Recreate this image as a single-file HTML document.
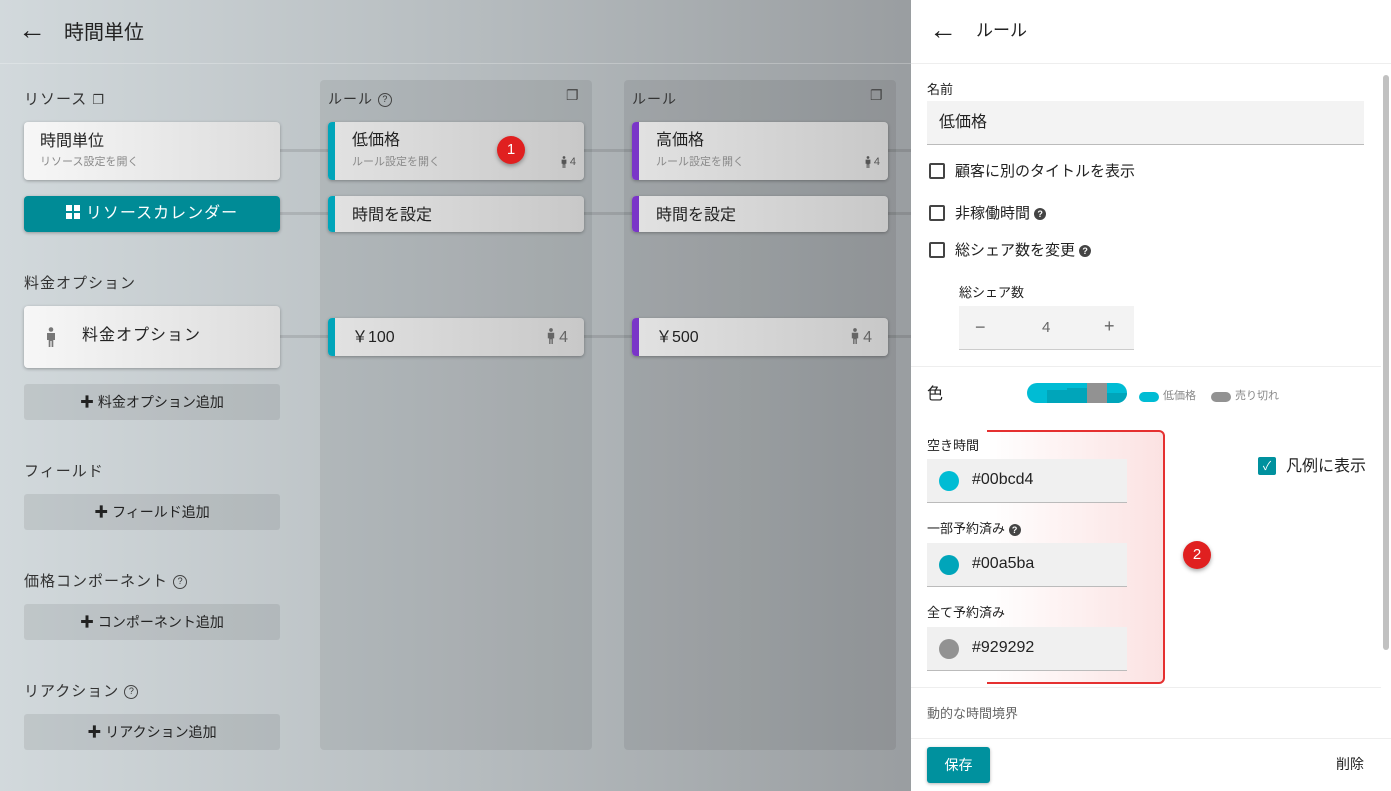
<!DOCTYPE html>
<html><head><meta charset="utf-8"><style>
*{box-sizing:border-box;margin:0;padding:0}
body{width:1391px;height:791px;overflow:hidden;position:relative;font-family:"Liberation Sans","Noto Sans CJK JP",sans-serif;color:#222;line-height:1.3;background:linear-gradient(90deg,#d2d9dc 0%,#b5bbbe 35%,#9a9ea1 65%,#888b8d 100%)}
.abs{position:absolute}
.hdr{left:0;top:0;width:911px;height:64px;border-bottom:1px solid rgba(255,255,255,.25)}
.col{background:rgba(0,0,0,.07);border-radius:4px}
.card{position:absolute;border-radius:4px;background:linear-gradient(90deg,#f7f7f7,#dcdcdc);box-shadow:0 1px 3px rgba(0,0,0,.3)}
.rc{background:linear-gradient(90deg,#e2e2e2,#c8c8c8)}
.bar{position:absolute;left:0;top:0;bottom:0;width:7px;border-radius:4px 0 0 4px}
.t{position:absolute;font-size:16px}
.s{position:absolute;font-size:11px;color:#8a8a8a}
.btn{position:absolute;left:24px;width:256px;height:36px;border-radius:3px;background:rgba(0,0,0,.08);font-size:14px;text-align:center;line-height:36px;color:#222}
.line{position:absolute;height:3px;background:rgba(0,0,0,.1)}
.lbl{position:absolute;font-size:15px;color:#333;letter-spacing:1px}
.panel{left:911px;top:0;width:480px;height:791px;background:#fff}
.cb{position:absolute;width:16px;height:16px;border:2px solid #444;border-radius:2px}
.field{position:absolute;left:927px;width:200px;height:44px;background:#f0f0f0;border-bottom:1px solid #bbb;font-size:16px}
.dot{position:absolute;left:12px;top:12px;width:20px;height:20px;border-radius:50%}
.q{display:inline-block;width:12px;height:12px;border-radius:50%;background:#444;color:#fff;font-size:9px;text-align:center;line-height:12px;font-weight:bold;vertical-align:middle}
.qo{display:inline-block;width:14px;height:14px;border:1.5px solid #444;border-radius:50%;font-size:9px;text-align:center;line-height:11px;letter-spacing:0;vertical-align:middle}
.badge{position:absolute;width:28px;height:28px;border-radius:50%;background:#e02020;color:#fff;font-size:15px;text-align:center;line-height:28px;box-shadow:0 2px 4px rgba(0,0,0,.35)}
.pi{display:inline-block;vertical-align:middle}
</style></head><body>
<svg width="0" height="0" style="position:absolute"><defs><symbol id="per" viewBox="0 0 10 20"><circle cx="5" cy="2.5" r="2.3" fill="currentColor"/><path d="M1 6h8v7H7.3v7H5.6v-6H4.4v6H2.7v-7H1z" fill="currentColor"/></symbol></defs></svg>
<div class="abs hdr"></div>
<div class="abs" style="left:18px;top:17px;font-size:28px;line-height:26px">&#8592;</div>
<div class="abs" style="left:64px;top:20px;font-size:20px">時間単位</div>

<div class="abs col" style="left:320px;top:80px;width:272px;height:670px"></div>
<div class="abs col" style="left:624px;top:80px;width:272px;height:670px"></div>

<div class="lbl" style="left:24px;top:90px">リソース <span style="font-size:13px">❐</span></div>
<div class="lbl" style="left:328px;top:90px;font-size:14px">ルール <span class="qo">?</span></div>
<div class="abs" style="left:566px;top:86px;font-size:14px;color:#444">❐</div>
<div class="lbl" style="left:632px;top:90px;font-size:14px">ルール</div>
<div class="abs" style="left:870px;top:86px;font-size:14px;color:#444">❐</div>

<div class="line" style="left:280px;top:149px;width:631px"></div>
<div class="line" style="left:280px;top:212px;width:631px"></div>
<div class="line" style="left:280px;top:335px;width:631px"></div>

<div class="card" style="left:24px;top:122px;width:256px;height:58px"><div class="t" style="left:16px;top:10px">時間単位</div><div class="s" style="left:16px;top:33px">リソース設定を開く</div></div>
<div class="abs" style="left:24px;top:196px;width:256px;height:36px;border-radius:4px;background:#008b96;box-shadow:0 1px 3px rgba(0,0,0,.3);color:#fff;font-size:16px;line-height:36px;text-align:center;letter-spacing:1px"><svg class="pi" width="14" height="14" viewBox="0 0 14 14" style="margin-right:6px;margin-top:-3px"><rect x="0" y="0" width="6" height="6" fill="#fff"/><rect x="8" y="0" width="6" height="6" fill="#fff"/><rect x="0" y="8" width="6" height="6" fill="#fff"/><rect x="8" y="8" width="6" height="6" fill="#fff"/></svg>リソースカレンダー</div>

<div class="card rc" style="left:328px;top:122px;width:256px;height:58px"><div class="bar" style="background:#00a5ba"></div><div class="t" style="left:24px;top:9px">低価格</div><div class="s" style="left:24px;top:33px">ルール設定を開く</div><div class="s" style="right:8px;top:33px;color:#555"><svg class="pi" width="6" height="12"><use href="#per"/></svg> 4</div></div>
<div class="badge" style="left:497px;top:136px">1</div>
<div class="card rc" style="left:328px;top:196px;width:256px;height:36px"><div class="bar" style="background:#00a5ba"></div><div class="t" style="left:24px;top:10px">時間を設定</div></div>
<div class="card rc" style="left:328px;top:318px;width:256px;height:38px"><div class="bar" style="background:#00a5ba"></div><div class="t" style="left:24px;top:10px">￥100</div><div class="abs" style="right:16px;top:10px;font-size:16px;color:#666"><svg class="pi" width="8" height="16" style="margin-top:-3px"><use href="#per"/></svg> 4</div></div>

<div class="card rc" style="left:632px;top:122px;width:256px;height:58px"><div class="bar" style="background:#7a35c8"></div><div class="t" style="left:24px;top:9px">高価格</div><div class="s" style="left:24px;top:33px">ルール設定を開く</div><div class="s" style="right:8px;top:33px;color:#555"><svg class="pi" width="6" height="12"><use href="#per"/></svg> 4</div></div>
<div class="card rc" style="left:632px;top:196px;width:256px;height:36px"><div class="bar" style="background:#7a35c8"></div><div class="t" style="left:24px;top:10px">時間を設定</div></div>
<div class="card rc" style="left:632px;top:318px;width:256px;height:38px"><div class="bar" style="background:#7a35c8"></div><div class="t" style="left:24px;top:10px">￥500</div><div class="abs" style="right:16px;top:10px;font-size:16px;color:#666"><svg class="pi" width="8" height="16" style="margin-top:-3px"><use href="#per"/></svg> 4</div></div>

<div class="lbl" style="left:24px;top:274px">料金オプション</div>
<div class="card" style="left:24px;top:306px;width:256px;height:62px"><svg class="abs" style="left:22px;top:21px;color:#777" width="10" height="20"><use href="#per"/></svg><div class="t" style="left:58px;top:20px;letter-spacing:1px">料金オプション</div></div>
<div class="btn" style="top:384px">✚ 料金オプション追加</div>
<div class="lbl" style="left:24px;top:462px">フィールド</div>
<div class="btn" style="top:494px">✚ フィールド追加</div>
<div class="lbl" style="left:24px;top:572px">価格コンポーネント <span class="qo">?</span></div>
<div class="btn" style="top:604px">✚ コンポーネント追加</div>
<div class="lbl" style="left:24px;top:682px">リアクション <span class="qo">?</span></div>
<div class="btn" style="top:714px">✚ リアクション追加</div>

<div class="abs panel">
<div class="abs" style="left:0;top:0;width:480px;height:64px;border-bottom:1px solid #eee"></div>
<div class="abs" style="left:18px;top:17px;font-size:28px;line-height:26px">&#8592;</div>
<div class="abs" style="left:65px;top:20px;font-size:17px">ルール</div>
<div class="abs" style="left:472px;top:75px;width:6px;height:575px;background:#c1c1c1;border-radius:3px"></div>
</div>
<div class="abs" style="left:927px;top:82px;font-size:13px">名前</div>
<div class="abs" style="left:927px;top:101px;width:437px;height:44px;background:#f3f3f3;border-bottom:1px solid #bbb;font-size:16px;padding:12px 12px">低価格</div>
<div class="cb" style="left:929px;top:163px"></div><div class="abs" style="left:955px;top:162px;font-size:15px">顧客に別のタイトルを表示</div>
<div class="cb" style="left:929px;top:205px"></div><div class="abs" style="left:955px;top:204px;font-size:15px">非稼働時間 <span class="q">?</span></div>
<div class="cb" style="left:929px;top:242px"></div><div class="abs" style="left:955px;top:241px;font-size:15px">総シェア数を変更 <span class="q">?</span></div>
<div class="abs" style="left:959px;top:285px;font-size:13px">総シェア数</div>
<div class="abs" style="left:959px;top:306px;width:175px;height:44px;background:#f3f3f3;border-bottom:1px solid #ccc;font-size:15px;color:#666"><span class="abs" style="left:16px;top:10px;font-size:18px">−</span><span class="abs" style="left:83px;top:12px">4</span><span class="abs" style="left:145px;top:9px;font-size:18px">+</span></div>
<div class="abs" style="left:911px;top:366px;width:470px;height:1px;background:#eee"></div>
<div class="abs" style="left:927px;top:385px;font-size:16px">色</div>
<div class="abs" style="left:1027px;top:383px;width:100px;height:20px;border-radius:10px;background:#00bcd4;overflow:hidden"><div class="abs" style="left:20px;top:7px;width:20px;height:13px;background:#00a5ba"></div><div class="abs" style="left:40px;top:5px;width:20px;height:15px;background:#00a5ba"></div><div class="abs" style="left:60px;top:0;width:20px;height:20px;background:#929292"></div><div class="abs" style="left:80px;top:10px;width:20px;height:10px;background:#00a5ba"></div></div>
<div class="abs" style="left:1139px;top:392px;width:20px;height:10px;border-radius:5px;background:#00bcd4"></div><div class="abs" style="left:1163px;top:389px;font-size:11px;color:#888">低価格</div>
<div class="abs" style="left:1211px;top:392px;width:20px;height:10px;border-radius:5px;background:#929292"></div><div class="abs" style="left:1235px;top:389px;font-size:11px;color:#888">売り切れ</div>
<div class="abs" style="left:987px;top:430px;width:178px;height:254px;border:2px solid #e53030;border-left:none;border-radius:0 6px 6px 0;background:linear-gradient(90deg,rgba(230,60,60,0) 0%,rgba(230,60,60,.15) 100%)"></div>
<div class="badge" style="left:1183px;top:541px">2</div>
<div class="abs" style="left:927px;top:438px;font-size:13px">空き時間</div>
<div class="field" style="top:459px"><div class="dot" style="background:#00bcd4"></div><span class="abs" style="left:45px;top:11px">#00bcd4</span></div>
<div class="abs" style="left:927px;top:521px;font-size:13px">一部予約済み <span class="q">?</span></div>
<div class="field" style="top:543px"><div class="dot" style="background:#00a5ba"></div><span class="abs" style="left:45px;top:11px">#00a5ba</span></div>
<div class="abs" style="left:927px;top:605px;font-size:13px">全て予約済み</div>
<div class="field" style="top:627px"><div class="dot" style="background:#929292"></div><span class="abs" style="left:45px;top:11px">#929292</span></div>
<div class="abs" style="left:1258px;top:457px;width:18px;height:18px;background:#00919e;border-radius:2px;color:#fff;font-size:12px;text-align:center;line-height:18px">✓</div>
<div class="abs" style="left:1286px;top:457px;font-size:16px">凡例に表示</div>
<div class="abs" style="left:911px;top:687px;width:470px;height:1px;background:#eee"></div>
<div class="abs" style="left:927px;top:706px;font-size:13px;color:#666">動的な時間境界</div>
<div class="abs" style="left:911px;top:738px;width:480px;height:1px;background:#eee"></div>
<div class="abs" style="left:927px;top:747px;width:63px;height:36px;background:#00919e;border-radius:3px;color:#fff;font-size:14px;text-align:center;line-height:36px;box-shadow:0 1px 3px rgba(0,0,0,.3)">保存</div>
<div class="abs" style="left:1336px;top:755px;font-size:14px">削除</div>
</body></html>
